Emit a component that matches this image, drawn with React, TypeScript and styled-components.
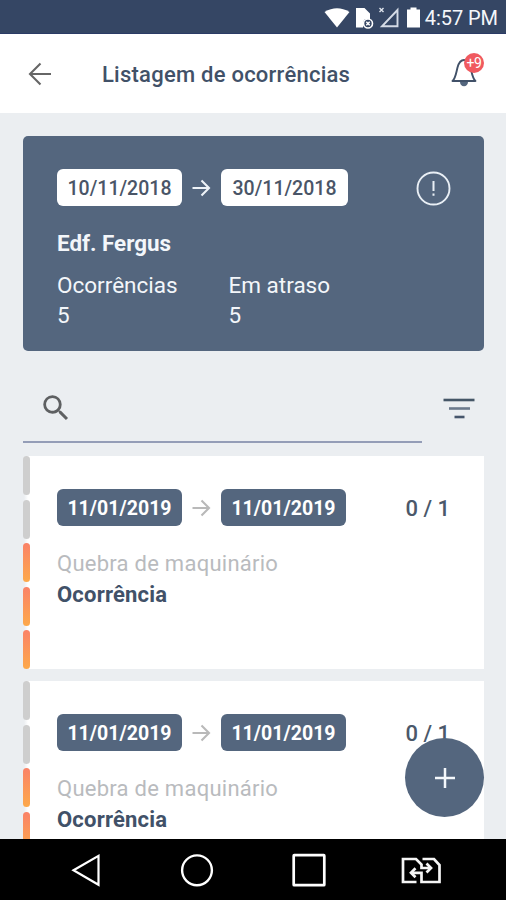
import React from "react";
import styled, { createGlobalStyle } from "styled-components";

const SLATE = "#54667e";
const NAVY = "#415168";

const GlobalStyle = createGlobalStyle`
  *, *::before, *::after { box-sizing: border-box; }
  body {
    margin: 0;
    background: #ebeef1;
    font-family: Roboto, "Liberation Sans", sans-serif;
  }
  svg { display: block; flex: none; overflow: visible; }
`;

const Screen = styled.div`
  position: relative;
  display: flex;
  flex-direction: column;
  width: 506px;
  height: 900px;
  overflow: hidden;
  background: #ebeef1;
`;

const StatusBar = styled.div`
  display: flex;
  flex: none;
  align-items: center;
  justify-content: flex-end;
  height: 34px;
  padding: 2px 8px 0 0;
  background: #354664;
  border-bottom: 1px solid #2b3b66;
`;

const StatusIcons = styled.div`
  display: flex;
  align-items: center;
  gap: 5px;
`;

const Clock = styled.span`
  margin-left: 4px;
  color: #f4f6fa;
  font-size: 20px;
  line-height: 24px;
  letter-spacing: -0.05px;
  white-space: nowrap;
`;

const Header = styled.header`
  display: flex;
  flex: none;
  align-items: center;
  height: 79px;
  padding: 0 20px 0 28px;
  background: #fff;
`;

const Title = styled.h1`
  flex: 1;
  margin: 3px 0 0 50px;
  color: ${NAVY};
  font-size: 22px;
  font-weight: 500;
  line-height: 28px;
  letter-spacing: 0.24px;
`;

const BellButton = styled.div`
  position: relative;
  width: 36px;
  height: 40px;
`;

const Badge = styled.span`
  position: absolute;
  top: -1px;
  left: 14px;
  width: 20px;
  height: 20px;
  border-radius: 50%;
  background: #f0595f;
  color: #fff;
  font-size: 14px;
  line-height: 20px;
  letter-spacing: -0.5px;
  text-align: center;
`;

const Content = styled.main`
  flex: 1;
  min-height: 0;
  padding: 23px 22px 0 23px;
  overflow: hidden;
`;

const Summary = styled.section`
  height: 215px;
  padding: 33px 33px 0 34px;
  border-radius: 5px;
  background: ${SLATE};
  color: #f3f6fa;
`;

const DateRow = styled.div`
  display: flex;
  align-items: center;
  height: 37px;
`;

const DatePill = styled.span<{ $light?: boolean; $end?: boolean }>`
  width: ${(p) => (p.$light && p.$end ? 127 : 125)}px;
  height: 37px;
  border-radius: 6px;
  background: ${(p) => (p.$light ? "#fff" : SLATE)};
  color: ${(p) => (p.$light ? "#4a5567" : "#fff")};
  font-size: 19.5px;
  font-weight: ${(p) => (p.$light ? 500 : 700)};
  line-height: 40px;
  letter-spacing: 0.02px;
  text-align: center;
`;

const ArrowSlot = styled.span<{ $light?: boolean }>`
  display: flex;
  justify-content: center;
  width: 39px;
  padding-right: 1px;
  color: ${(p) => (p.$light ? "#eef3f8" : "#b9b9b9")};
`;

const RowEnd = styled.span`
  margin-left: auto;
`;

const AlertSlot = styled(RowEnd)`
  padding-top: 2px;
`;

const Building = styled.div`
  margin-top: 23px;
  font-size: 22.4px;
  font-weight: 700;
  line-height: 28px;
`;

const Stats = styled.dl`
  display: grid;
  grid-template-columns: 171.5px 1fr;
  margin: 13px 0 0;
`;

const Stat = styled.div`
  font-size: 22.5px;
  line-height: 30px;
`;

const StatLabel = styled.dt`
  margin: 0;
`;

const StatValue = styled.dd`
  margin: 0;
`;

const SearchRow = styled.div`
  display: flex;
  align-items: center;
  height: 92px;
  margin: 0 0 13px;
`;

const SearchField = styled.div`
  display: flex;
  align-items: center;
  width: 399px;
  height: 92px;
  padding: 24px 0 0 16px;
  border-bottom: 2px solid #949db7;
`;

const FilterSlot = styled.div`
  margin: 23px 0 0 15.5px;
`;

const List = styled.div`
  display: flex;
  flex-direction: column;
  gap: 12px;
`;

const Item = styled.article`
  display: flex;
  flex: none;
  height: 213px;
  background: linear-gradient(90deg, #ebeef1 1px, #fff 5px);
`;

const Progress = styled.div`
  display: flex;
  flex-direction: column;
  gap: 4.5px;
  width: 7px;
`;

const Segment = styled.span<{ $active: boolean }>`
  flex: 1;
  border-radius: 4px;
  background: ${(p) =>
    p.$active ? "linear-gradient(#fa8268, #fda94a)" : "#cecece"};
`;

const ItemBody = styled.div`
  flex: 1;
  padding: 33px 34px 0 27px;
`;

const Counter = styled(RowEnd)`
  padding-top: 1px;
  color: #4b586a;
  font-size: 22px;
  font-weight: 500;
`;

const Category = styled.div`
  margin-top: 22px;
  color: #b9bbbe;
  font-size: 22px;
  line-height: 31px;
  letter-spacing: 0.26px;
`;

const Kind = styled.div`
  color: ${NAVY};
  font-size: 22px;
  font-weight: 700;
  line-height: 32px;
  letter-spacing: 0.2px;
`;

const Fab = styled.button`
  position: absolute;
  right: 22px;
  bottom: 83px;
  display: flex;
  align-items: center;
  justify-content: center;
  width: 79px;
  height: 79px;
  padding: 0;
  border: 0;
  border-radius: 50%;
  background: ${SLATE};
`;

const NavBar = styled.nav`
  display: flex;
  flex: none;
  align-items: center;
  height: 61px;
  padding-left: 70px;
  gap: 77px;
  background: #000;
`;

const WifiIcon = () => (
  <svg width="26" height="22" viewBox="0 0 26 22">
    <path d="M0.500 5Q13 -2.500 25.500 5L13 20.500Z" fill="#fff" />
  </svg>
);

const SimIcon = () => (
  <svg width="19" height="22" viewBox="0 0 19 22">
    <path d="M1 1H9.500L15 6.500V12H10L8 15V20.500H1Z" fill="#fff" />
    <circle cx="13" cy="16.500" r="4.500" fill="#354664" stroke="#fff" strokeWidth="1.600" />
    <path d="M11.300 14.800L14.700 18.200M14.700 14.800L11.300 18.200" stroke="#fff" strokeWidth="1.500" />
  </svg>
);

const SignalIcon = () => (
  <svg width="22" height="22" viewBox="0 0 22 22">
    <path d="M0.500 1L4.500 5M4.500 1L0.500 5" stroke="#dfe4ed" strokeWidth="1.400" />
    <path d="M3 19.300H18.500V3Z" fill="none" stroke="#d5dbe6" strokeWidth="1.900" />
  </svg>
);

const BatteryIcon = () => (
  <svg width="15" height="22" viewBox="0 0 15 22">
    <path d="M4.500 0.500H10.500V2.500H14V20.500H1V2.500H4.500Z" fill="#fff" />
  </svg>
);

const BackIcon = () => (
  <svg width="24" height="24" viewBox="0 0 24 24" fill="none" stroke="#666" strokeWidth="2.100">
    <path d="M23 12H2M12.500 1.500L2 12L12.500 22.500" />
  </svg>
);

const BellIcon = () => (
  <svg width="36" height="40" viewBox="0 0 36 40" fill="none">
    <path
      d="M2.500 27C5.500 24.500 6 19.500 7.500 13.500C8.700 9 11 6 14 6C17 6 19.300 9 20.500 13.500C22 19.500 22.500 24.500 25.500 27Z"
      stroke={NAVY}
      strokeWidth="1.900"
      strokeLinejoin="round"
    />
    <path d="M10 28H18C18 30.500 16.300 32.200 14 32.200S10 30.500 10 28Z" fill={SLATE} />
  </svg>
);

const Arrow = () => (
  <svg width="20" height="18" viewBox="0 0 20 18" fill="none" stroke="currentColor" strokeWidth="2.100">
    <path d="M1.500 9H18M10.500 1.500L18 9L10.500 16.500" />
  </svg>
);

const AlertIcon = () => (
  <svg width="35" height="35" viewBox="0 0 35 35" fill="none" stroke="#e9eff5">
    <circle cx="17.500" cy="17.500" r="16" strokeWidth="1.900" />
    <path d="M17.500 10V20M17.500 22.500V24.700" strokeWidth="2" />
  </svg>
);

const SearchIcon = () => (
  <svg width="34" height="34" viewBox="0 0 24 24" fill="#5e6062">
    <path d="M15.500 14h-.79l-.28-.27A6.470 6.470 0 0 0 16 9.500 6.500 6.500 0 1 0 9.500 16c1.610 0 3.090-.59 4.230-1.570l.27.28v.79l5 4.990L20.490 19l-4.990-5zm-6 0C7.010 14 5 11.990 5 9.500S7.010 5 9.500 5 14 7.010 14 9.500 11.990 14 9.500 14z" />
  </svg>
);

const FilterIcon = () => (
  <svg width="42" height="24" viewBox="0 0 42 24" fill="none" strokeWidth="2.600">
    <path d="M5.500 3H36.500" stroke="#455667" />
    <path d="M11 11.500H32" stroke="#6c7a8d" />
    <path d="M16.500 20H26.500" stroke="#46566c" />
  </svg>
);

const PlusIcon = () => (
  <svg width="22" height="22" viewBox="0 0 22 22" fill="none" stroke="#f4f8fc" strokeWidth="2.500">
    <path d="M1 11H21M11 1V21" />
  </svg>
);

const NavBack = () => (
  <svg width="34" height="34" viewBox="0 0 34 34" fill="none" stroke="#fff" strokeWidth="2.200">
    <path d="M3.500 17.300L28.500 2.800V31.800Z" />
  </svg>
);

const NavHome = () => (
  <svg width="34" height="34" viewBox="0 0 34 34" fill="none" stroke="#fff" strokeWidth="2.400">
    <circle cx="16" cy="17.300" r="14.900" />
  </svg>
);

const NavRecent = () => (
  <svg width="34" height="34" viewBox="0 0 34 34" fill="none" stroke="#fff" strokeWidth="2.700">
    <rect x="1.700" y="2.200" width="30.600" height="30" rx="0.500" />
  </svg>
);

const NavSwap = () => (
  <svg width="40" height="28" viewBox="0 0 40 28" fill="none" stroke="#f5f5f5" strokeWidth="2.700">
    <path d="M13.500 26H0V3H13L18.500 8.500V12H27" />
    <path d="M19.500 3H31L36.500 9V26H18.500V16.800H9" />
    <path d="M23.500 7.500L28 12L23.500 16.500M12.500 12.300L8 16.800L12.500 21.300" />
  </svg>
);

interface Occurrence {
  id: number;
  start: string;
  end: string;
  done: string;
  category: string;
  kind: string;
  levels: boolean[];
}

const levels = [false, false, true, true, true];

const occurrences: Occurrence[] = [1, 2].map((id) => ({
  id,
  start: "11/01/2019",
  end: "11/01/2019",
  done: "0 / 1",
  category: "Quebra de maquinário",
  kind: "Ocorrência",
  levels,
}));

const stats = [
  { label: "Ocorrências", value: 5 },
  { label: "Em atraso", value: 5 },
];

const DateRange = ({ start, end, light }: { start: string; end: string; light?: boolean }) => (
  <>
    <DatePill $light={light}>{start}</DatePill>
    <ArrowSlot $light={light}>
      <Arrow />
    </ArrowSlot>
    <DatePill $light={light} $end>{end}</DatePill>
  </>
);

const OccurrenceItem = ({ item }: { item: Occurrence }) => (
  <Item>
    <Progress>
      {item.levels.map((active, i) => (
        <Segment key={i} $active={active} />
      ))}
    </Progress>
    <ItemBody>
      <DateRow>
        <DateRange start={item.start} end={item.end} />
        <Counter>{item.done}</Counter>
      </DateRow>
      <Category>{item.category}</Category>
      <Kind>{item.kind}</Kind>
    </ItemBody>
  </Item>
);

export default function App() {
  return (
    <>
      <GlobalStyle />
      <Screen>
        <StatusBar>
          <StatusIcons>
            <WifiIcon />
            <SimIcon />
            <SignalIcon />
            <BatteryIcon />
          </StatusIcons>
          <Clock>4:57 PM</Clock>
        </StatusBar>
        <Header>
          <BackIcon />
          <Title>Listagem de ocorrências</Title>
          <BellButton>
            <BellIcon />
            <Badge>+9</Badge>
          </BellButton>
        </Header>
        <Content>
          <Summary>
            <DateRow>
              <DateRange start="10/11/2018" end="30/11/2018" light />
              <AlertSlot>
                <AlertIcon />
              </AlertSlot>
            </DateRow>
            <Building>Edf. Fergus</Building>
            <Stats>
              {stats.map((s) => (
                <Stat key={s.label}>
                  <StatLabel>{s.label}</StatLabel>
                  <StatValue>{s.value}</StatValue>
                </Stat>
              ))}
            </Stats>
          </Summary>
          <SearchRow>
            <SearchField>
              <SearchIcon />
            </SearchField>
            <FilterSlot>
              <FilterIcon />
            </FilterSlot>
          </SearchRow>
          <List>
            {occurrences.map((item) => (
              <OccurrenceItem key={item.id} item={item} />
            ))}
          </List>
        </Content>
        <NavBar>
          <NavBack />
          <NavHome />
          <NavRecent />
          <NavSwap />
        </NavBar>
        <Fab aria-label="+">
          <PlusIcon />
        </Fab>
      </Screen>
    </>
  );
}
